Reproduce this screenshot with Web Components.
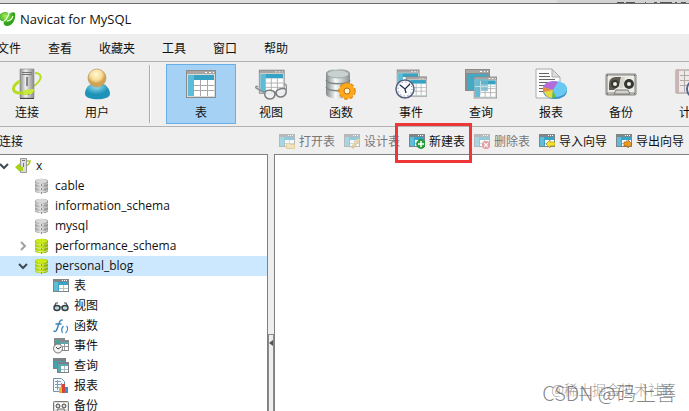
<!DOCTYPE html>
<html lang="zh-CN">
<head>
<meta charset="utf-8">
<meta name="viewport" content="width=device-width, initial-scale=1">
<title>Navicat for MySQL</title>
<style>
  html, body {
    height: 100%;
    margin: 0;
    overflow: hidden;
  }
  body {
    font-family: "Noto Sans CJK SC", sans-serif;
    font-size: 12px;
    line-height: 20px;
    color: #111;
    background: #fff;
  }
</style>
</head>
<body>
<navicat-window></navicat-window>

<script>
// parts that several icons share
const windowBase = `
  <path fill="#8b8b8b" d="M1 2h30v28H1z"/>
  <path fill="#a9a5a3" d="M2 3h28v3H2z"/>
  <path fill="#fff" d="M20 4h2v1h-2zM24 4h2v1h-2zM28 4h1v1h-1z"/>
  <path fill="#d9d9d6" d="M2 6h28v23H2z"/>
  <path fill="#37a3c4" d="M3 7h26v21H3z"/>
  <path fill="#7bcde3" d="M3 7h6v21H3z" opacity=".6"/>
  <path fill="#fff" d="M9 12h20v16H9z"/>
  <path stroke="#a9a9a9" fill="none" d="M9 17.500h20M9 22.500h20M15.500 12v16M22.500 12v16"/>`;

const smallWindow = `
  <path fill="#7d8589" d="M0 1h16v13H0z"/>
  <path fill="#fff" d="M9 2h1v1H9zM11 2h1v1h-1zM13 2h1v1h-1z"/>
  <path fill="#36a5c8" d="M1 4h14v9H1z"/>
  <path fill="#8ed3e6" d="M1 4h4v9H1z" opacity=".5"/>
  <path fill="#fff" d="M6 7h9v6H6z"/>
  <path stroke="#b9c3c8" fill="none" d="M6 10.500h9M10.500 7v6"/>`;

const cylinder = (a, b, c) => `
  <defs><linearGradient id="g"><stop stop-color="${b}"/><stop offset=".45" stop-color="${a}"/><stop offset="1" stop-color="${c}"/></linearGradient></defs>
  <path fill="url(#g)" d="M1 3c0-3 13-3 13 0v10c0 3-13 3-13 0z"/>
  <ellipse cx="7.500" cy="3" rx="6" ry="2" fill="${a}"/>
  <path fill="none" stroke="#fff" stroke-opacity=".5" stroke-width="1" d="M1 5c2 2.500 11 2.500 13 0M1 8.500c2 2.500 11 2.500 13 0M1 12c2 2.500 11 2.500 13 0"/>
  <path fill="none" stroke="${c}" stroke-dasharray="2 2" d="M7.500 6v10M11 6v9"/>`;

const icons = {
  logo: [16, `
    <defs><radialGradient id="l" cx=".4" cy=".3"><stop stop-color="#a8ef61"/><stop offset="1" stop-color="#2fa41b"/></radialGradient></defs>
    <path fill="url(#l)" d="M-1 5c1-3 4-4 7-4 2 0 2 2 3 2 1-1 4-3 6-1 1 6-2 13-8 13-3 0-4-3-3-5-3 1-5-2-5-5z"/>
    <path fill="none" stroke="#efffe2" stroke-width="1.200" d="M4 10c3-1 3-4 5-7M7 10c3 0 5-2 6-5"/>`],
  connect: [32, `
    <defs><linearGradient id="s"><stop stop-color="#8d8d8d"/><stop offset=".4" stop-color="#eee"/><stop offset="1" stop-color="#8a8a8a"/></linearGradient></defs>
    <path fill="none" stroke="#b7dc25" stroke-width="2" d="M24 5c10 0 6 11-6 15"/>
    <path fill="url(#s)" stroke="#888" stroke-width=".6" d="M9 1h14v29H9z"/>
    <path stroke="#777" fill="none" d="M11 4.500h10M11 6.500h10"/><path stroke="#333" d="M16 9v9"/>
    <path fill="#444" d="M14 24h1v3h-1zM17 24h1v3h-1zM9 30h14v1H9z"/>
    <path fill="none" stroke="#b5dc20" stroke-width="3" d="M9 13c-10 6-8 13 3 12 5 0 8-1 11-3"/>
    <path fill="#c8ea3a" d="M12 22l11-1-2 5-8 1z"/>`],
  user: [32, `
    <defs><radialGradient id="h" cx=".45" cy=".3"><stop stop-color="#fff9d5"/><stop offset=".65" stop-color="#f8dc98"/><stop offset="1" stop-color="#cfa352"/></radialGradient>
    <radialGradient id="b" cx=".45" cy=".2"><stop stop-color="#9be0f0"/><stop offset="1" stop-color="#1d93b9"/></radialGradient></defs>
    <path fill="url(#b)" d="M4 26c0-7 5-10 9-11h7c4 1 9 5 9 11 0 7-25 7-25 0z"/>
    <path fill="#7fd1e6" d="M12 16h9l-4 6z"/>
    <circle cx="16" cy="10" r="9" fill="url(#h)" stroke="#b99a66" stroke-width=".7"/>`],
  table: [32, windowBase],
  view: [32, `<g transform="translate(3 0) scale(.86)">${windowBase}</g>
    <path fill="#eef1f3" fill-opacity=".9" stroke="#7c7c7c" stroke-width="1.500" d="M10 24c2-3 9-2 10 1 0 4-2 6-5 6-4 0-6-3-5-7zM21 24c1-3 9-5 10-2 1 4-2 7-5 7s-5-2-5-5z"/>
    <path fill="none" stroke="#929292" stroke-width="1.500" d="M10 25L1 20c-1-2 1-2 2-1M31 22c1-3 1-6-2-6"/>`],
  func: [32, `
    <defs><linearGradient id="c"><stop stop-color="#838989"/><stop offset=".4" stop-color="#f7fafa"/><stop offset="1" stop-color="#8a9191"/></linearGradient></defs>
    <path fill="url(#c)" d="M1 6c0-7 24-7 24 0v20c0 6-24 6-24 0z"/><ellipse cx="13" cy="6" rx="11" ry="4" fill="#c9d1d0" stroke="#8e9898" stroke-width=".7"/>
    <path fill="none" stroke="#7e8888" stroke-width="1.500" d="M1 12c2 5 22 5 24 0M1 19c2 5 22 5 24 0"/>
    <circle cx="22" cy="23" r="7.500" fill="#f6a114" stroke="#e08a12" stroke-width="2.500" stroke-dasharray="3.500 2"/>
    <circle cx="22" cy="23" r="7.500" fill="#ffa81c"/><circle cx="22" cy="23" r="3" fill="#fff5cf" stroke="#bd6a0c"/>`],
  event: [32, `<g transform="translate(1 0) scale(.76)">${windowBase}</g><g transform="translate(10 7) scale(.72)">${windowBase}</g>
    <circle cx="10" cy="21" r="9" fill="#f9fbff" stroke="#57617d" stroke-width="1.500"/>
    <circle cx="10" cy="21" r="7" fill="none" stroke="#687188" stroke-dasharray="1 2.700"/>
    <path fill="none" stroke="#222d4a" stroke-width="1.300" d="M5 17l5 4 5-5M10 21l1 4"/>`],
  query: [32, `<g>
      <path fill="#8b8b8b" d="M0 1h25v22H0z"/><path fill="#a9a5a3" d="M1 2h23v3H1z"/><path fill="#fff" d="M15 3h2v1h-2zM19 3h1v1h-1zM22 3h1v1h-1z"/><path fill="#43a9c4" d="M2 6h21v16H2z"/>
    </g>
    <g transform="translate(8 7) scale(.78)">${windowBase}</g><path fill="#6db9cf" opacity=".75" d="M9 11h14v12H9z"/><path stroke="#c5dce4" fill="none" d="M15.500 13v14M10 18.500h20"/>`],
  report: [32, `
    <path fill="#fcfcfc" stroke="#aaa" d="M1 1h16l8 8v21H1z"/><path fill="#ddd" stroke="#aaa" d="M17 1v8h8z"/>
    <path stroke="#666" fill="none" d="M4 5.500h10M4 8.500h11M4 11.500h16M4 14.500h9M4 17.500h5M4 20.500h4M4 23.500h4"/>
    <ellipse cx="20" cy="23" rx="12" ry="8" fill="#3f93c8"/><ellipse cx="20" cy="21" rx="12" ry="8" fill="#69c9f2"/>
    <path fill="#b56bd9" d="M18 22L8 19c2-5 10-7 15-5z"/><path fill="#ed8a3c" d="M18 22L8 19c-1 2 0 4 1 5z"/><path fill="#e7d83d" d="M18 22l-9 2c1 3 4 6 8 6z"/><path fill="#67bd43" d="M18 22l-1 8 4-1z"/>`],
  backup: [32, `
    <rect x="1" y="6" width="30" height="21" rx="1" fill="#b9b9b4" stroke="#858580"/><path fill="#ecece8" d="M3 8h26v16H3z"/>
    <path fill="#5e5b50" d="M4 17c0-7 3-8 9-8h3l-2 9-5 4H4z"/>
    <path fill="#d6d4cb" d="M16 9h4l-2 11h-4z"/>
    <circle cx="10" cy="16" r="4" fill="#37372f"/><circle cx="24" cy="16" r="5" fill="#37372f"/>
    <circle cx="10" cy="16" r="2" fill="#eee"/><circle cx="24" cy="16" r="2" fill="#eee"/>
    <path fill="#d3d1c9" stroke="#777" d="M9 26l2-4h12l2 4z"/>
    <path fill="#555" d="M2 7h1v1H2zM29 7h1v1h-1zM2 25h1v1H2zM29 25h1v1h-1z"/>`],
  plan: [32, `<path fill="#eee9e9" stroke="#9b8f8f" d="M1 2h29v23H1z"/><path fill="#c9b5b5" d="M1 1h3v24H1z"/>
    <path fill="none" stroke="#b2a9a9" d="M5 7.500h24M5 12.500h24M5 17.500h24M9.500 3v21M15.500 3v21M21.500 3v21"/>
    <circle cx="21" cy="21" r="9" fill="#f6f9ff" stroke="#52678d" stroke-width="2"/>`],
  openTable: [16, `${smallWindow}<path fill="#f3d88c" stroke="#d7ae49" d="M7.500 10.500h3l1 1h4v4h-8z"/>`],
  designTable: [16, `${smallWindow}<path stroke="#c0a143" stroke-width="3" d="M8 15l7-9"/><path stroke="#ffe891" d="M9 13l6-7"/>`],
  newTable: [16, `${smallWindow}<circle cx="12" cy="11" r="4.500" fill="#27a53b" stroke="#147d26" stroke-width=".6"/><path stroke="#fff" stroke-width="1.500" d="M12 8v6M9 11h6"/>`],
  dropTable: [16, `${smallWindow}<circle cx="12" cy="12" r="4" fill="#dc4854"/><path stroke="#fff" stroke-width="1.300" d="M10 10l4 4M14 10l-4 4"/>`],
  importTable: [16, `${smallWindow}<path fill="#f5df32" stroke="#a98f12" stroke-width=".7" d="M7 11l4-4v2h5v4h-5v2z"/>`],
  exportTable: [16, `${smallWindow}<path fill="#f19a22" stroke="#a75c0d" stroke-width=".7" d="M16 11l-4-4v2H8v4h4v2z"/>`],
  server: [16, `<path fill="none" stroke="#a8ce1c" stroke-width="1.500" d="M10 3h5c0 3-2 4-4 5"/>
    <path fill="#ddd" stroke="#999" d="M5.500.500h6v14h-6z"/><path fill="#777" d="M7 2h3v1H7zM8 5h1v4H8z"/>
    <path fill="#a9d317" d="M0 9l5-4v3l3 1v4H5v1z"/>`],
  dbOff: [16, cylinder('#d9d9d9', '#9b9b9b', '#8e8e8e')],
  dbOn: [16, cylinder('#cbea19', '#9fc60d', '#86aa08')],
  smallTable: [16, smallWindow],
  smallView: [16, `<path fill="none" stroke="#474d50" stroke-width="1.200" d="M1 9l2-4h2M15 9l-2-4h-2M7 9h2"/>
    <ellipse cx="4" cy="10" rx="3" ry="2.500" fill="#b7dadd" stroke="#383e41" stroke-width="1.400"/><ellipse cx="12" cy="10" rx="3" ry="2.500" fill="#b7dadd" stroke="#383e41" stroke-width="1.400"/>`],
  smallFunc: [16, `<path fill="none" stroke="#3a86b9" stroke-width="1.500" stroke-linecap="round" d="M1 13c4 3 4-12 8-11M3 6h5"/>
    <path fill="none" stroke="#3a86b9" stroke-width="1.200" d="M10.500 8c-2 2-2 5-1 7M13.500 8c2 2 1 5-1 7"/>`],
  smallEvent: [16, `<path fill="#85898a" d="M1 0h11v9H1z"/><path fill="#4aa39d" d="M2 2h9v6H2z"/><path fill="#85898a" d="M6 2h10v11H6z"/><path fill="#5da8af" d="M7 4h8v3H7z"/><path fill="#fff" d="M8 6h7v6H8z"/>
    <path stroke="#999" fill="none" d="M11.500 6v6M9 8.500h6"/><circle cx="5" cy="10.500" r="4.500" fill="#f3f3f3" stroke="#757575"/><path fill="none" stroke="#444" d="M3 9l2 2 3-2"/>`],
  smallQuery: [16, `<path fill="#7b8184" d="M0 0h13v11H0z"/><path fill="#45a2ad" d="M1 3h11v7H1z"/><path fill="#7b8184" d="M4 4h12v11H4z"/><path fill="#5da8af" d="M5 6h10v8H5z"/><path fill="#fff" d="M8 8h7v6H8z"/><path stroke="#abb" fill="none" d="M8 11.500h7M11.500 8v6"/>`],
  smallReport: [16, `<path fill="#f6faff" stroke="#7590a9" d="M.500.500h8l3 3v10h-11z"/><path fill="none" stroke="#7a9cbb" d="M2 3.500h6M2 6.500h8M2 9.500h5M4.500 2v10M8.500 5v4"/>
    <path fill="#d84436" d="M9 6h3v9H9z"/><path fill="#e4b633" d="M6 9h3v6H6z"/><path fill="#448bc9" d="M12 9h3v6h-3z"/>`],
  smallBackup: [16, `<rect x=".5" y="3.500" width="15" height="10" rx="1" fill="#ddd" stroke="#777"/><path fill="#fff" d="M2 5h12v6H2z"/>
    <circle cx="5" cy="8" r="2" fill="#ddd" stroke="#444"/><circle cx="11" cy="8" r="2" fill="#ddd" stroke="#444"/><path fill="none" stroke="#777" d="M4 13l1-2h6l1 2"/>`],
};

class AppIcon extends HTMLElement {
  constructor() {
    super();
    this.attachShadow({ mode: 'open' });
  }

  connectedCallback() {
    const [size, drawing] = icons[this.getAttribute('name')];
    this.shadowRoot.innerHTML = `
      <style>
        :host { display: block; flex: none; width: ${size}px; height: ${size}px; }
        svg { display: block; }
      </style>
      <svg width="${size}" height="${size}" viewBox="0 0 ${size} ${size}" aria-hidden="true">${drawing}</svg>`;
  }
}
customElements.define('app-icon', AppIcon);

// large button of the main toolbar
class ToolButton extends HTMLElement {
  constructor() {
    super();
    const shadow = this.attachShadow({ mode: 'open' });
    shadow.innerHTML = `
      <style>
        :host { display: block; flex: none; width: 70px; }
        button {
          display: flex;
          flex-direction: column;
          align-items: center;
          box-sizing: border-box;
          width: 100%;
          height: 60px;
          padding: 3px 0 0;
          border: 1px solid transparent;
          background: none;
          font: inherit;
          color: inherit;
        }
        span { margin-top: 2px; }
        :host([selected]) button { background: #a5d1f5; border-color: #68aee8; }
      </style>
      <button type="button"><app-icon name="${this.getAttribute('icon')}"></app-icon><span><slot></slot></span></button>`;
  }
}
customElements.define('tool-button', ToolButton);

// small button of the object toolbar
class ActionButton extends HTMLElement {
  constructor() {
    super();
    const shadow = this.attachShadow({ mode: 'open' });
    const disabled = this.hasAttribute('disabled') ? 'disabled' : '';
    shadow.innerHTML = `
      <style>
        :host { display: block; flex: none; position: relative; }
        button {
          display: flex;
          align-items: center;
          gap: 4px;
          padding: 0;
          border: 0;
          background: none;
          font: inherit;
          color: inherit;
          white-space: nowrap;
        }
        button:disabled { color: #777; }
        button:disabled app-icon { opacity: 0.5; }
        :host([marked])::after {
          content: "";
          position: absolute;
          inset: -8px -7px -12px -14px;
          border: 3px solid #ee3538;
          pointer-events: none;
          z-index: 1;
        }
      </style>
      <button type="button" ${disabled}><app-icon name="${this.getAttribute('icon')}"></app-icon><slot></slot></button>`;
  }
}
customElements.define('action-button', ActionButton);

class TreeRow extends HTMLElement {
  constructor() {
    super();
    const shadow = this.attachShadow({ mode: 'open' });
    const state = this.getAttribute('state');
    const arrow = {
      open: '<path fill="none" stroke="#404b52" stroke-width="2" d="M1 3l4 4 4-4"/>',
      closed: '<path fill="none" stroke="#a0a0a0" stroke-width="2" d="M3 1l4 4-4 4"/>',
    }[state] || '';
    shadow.innerHTML = `
      <style>
        :host {
          display: flex;
          align-items: center;
          height: 20px;
          white-space: nowrap;
          font-family: "Open Sans", "Noto Sans CJK SC", sans-serif;
        }
        :host([level="1"]) { padding-left: 19px; }
        :host([level="2"]) { padding-left: 38px; }
        :host([selected]) { background: #cce8ff; }
        svg { flex: none; margin-right: 6px; margin-left: -1px; }
        span { margin-left: 5px; }
      </style>
      <svg width="10" height="10" viewBox="0 0 10 10" aria-hidden="true">${arrow}</svg>
      <app-icon name="${this.getAttribute('icon')}"></app-icon>
      <span><slot></slot></span>`;
    this.setAttribute('role', 'treeitem');
  }
}
customElements.define('tree-row', TreeRow);

class MenuBar extends HTMLElement {
  constructor() {
    super();
    const shadow = this.attachShadow({ mode: 'open' });
    const items = ['文件', '查看', '收藏夹', '工具', '窗口', '帮助'];
    shadow.innerHTML = `
      <style>
        :host { display: block; background: #eee; border-bottom: 1px solid #b2b2b2; }
        nav { display: flex; gap: 27px; height: 27px; margin-left: -3px; }
        button { padding: 0; border: 0; background: none; font: inherit; color: inherit; }
      </style>
      <nav>${items.map((item) => `<button type="button">${item}</button>`).join('')}</nav>`;
  }
}
customElements.define('menu-bar', MenuBar);

class SplitHandle extends HTMLElement {
  constructor() {
    super();
    const shadow = this.attachShadow({ mode: 'open' });
    shadow.innerHTML = `
      <style>
        :host {
          display: grid;
          grid-template-rows: 7fr 3fr;
          box-sizing: border-box;
          width: 8px;
          background: #eee;
          border: solid #808080;
          border-width: 0 1px;
        }
        button {
          padding: 5px 0 0;
          border: 1px solid #8a8a8a;
          border-bottom: 0;
          background: #eee;
          display: flex;
          align-items: flex-start;
          justify-content: center;
        }
      </style>
      <div></div>
      <button type="button" aria-label="折叠">
        <svg width="4" height="6" viewBox="0 0 4 6"><path fill="#555" d="M4 0v6L0 3z"/></svg>
      </button>`;
  }
}
customElements.define('split-handle', SplitHandle);

class NavicatWindow extends HTMLElement {
  constructor() {
    super();
    const shadow = this.attachShadow({ mode: 'open' });
    shadow.innerHTML = `
      <style>
        :host {
          display: grid;
          grid-template-rows: auto auto auto auto auto minmax(0, 1fr);
          grid-template-columns: minmax(0, 1fr);
          height: 100vh;
          overflow: hidden;
          position: relative;
        }
        .backdrop {
          display: flex;
          justify-content: flex-end;
          height: 3px;
          background: #dedede;
          border-bottom: 1px solid #6b6b6b;
        }
        .backdrop svg { background: #d2d2d2; }
        header {
          display: flex;
          align-items: center;
          gap: 4px;
          height: 30px;
          background: #fff;
        }
        h1 {
          margin: 0;
          font: 13px/20px "Open Sans", sans-serif;
        }
        .tools {
          display: flex;
          height: 60px;
          padding: 2px 0;
          margin-left: -8px;
        }
        .tools-wrap, .actions { background: #efefef; }
        .tools-wrap { overflow: hidden; border-bottom: 1px solid #b2b2b2; }
        hr {
          flex: none;
          height: 58px;
          margin: 1px 15px 0 17px;
          border: 0;
          border-left: 1px solid #aaa;
          border-right: 1px solid #fff;
        }
        .actions {
          display: grid;
          grid-template-columns: 279px minmax(0, 1fr);
          align-items: center;
          height: 27px;
          padding-top: 1px;
          box-sizing: border-box;
        }
        .label { margin-left: -1px; }
        .buttons { display: flex; gap: 9px; }
        main {
          display: grid;
          grid-template-columns: 267px 8px minmax(0, 1fr);
          min-height: 0;
        }
        .tree, .objects { border-top: 1px solid #808080; background: #fff; overflow: hidden; }
        .tree { padding-top: 1px; }
        .mark {
          position: absolute;
          right: 13px;
          bottom: 6px;
          font-size: 20px;
          line-height: 24px;
          color: rgba(80, 80, 80, 0.7);
          font-weight: 300;
          white-space: nowrap;
        }
        .mark.second {
          bottom: 10px;
          font-size: 14px;
          color: rgba(120, 120, 120, 0.7);
        }
      </style>
      <div class="backdrop">
        <svg width="132" height="3" viewBox="0 0 132 3" aria-hidden="true"><path fill="none" stroke="#555" d="M60 2.500h7M69 2.500h9M88 2.500h1M97 2.500h3M103 2.500h12M118 2.500h2M124 2.500h5"/></svg>
      </div>
      <header><app-icon name="logo"></app-icon><h1>Navicat for MySQL</h1></header>
      <menu-bar></menu-bar>
      <div class="tools-wrap">
        <div class="tools">
          <tool-button icon="connect">连接</tool-button>
          <tool-button icon="user">用户</tool-button>
          <hr>
          <tool-button icon="table" selected>表</tool-button>
          <tool-button icon="view">视图</tool-button>
          <tool-button icon="func">函数</tool-button>
          <tool-button icon="event">事件</tool-button>
          <tool-button icon="query">查询</tool-button>
          <tool-button icon="report">报表</tool-button>
          <tool-button icon="backup">备份</tool-button>
          <tool-button icon="plan">计划</tool-button>
        </div>
      </div>
      <div class="actions">
        <div class="label">连接</div>
        <div class="buttons">
          <action-button icon="openTable" disabled>打开表</action-button>
          <action-button icon="designTable" disabled>设计表</action-button>
          <action-button icon="newTable" marked>新建表</action-button>
          <action-button icon="dropTable" disabled>删除表</action-button>
          <action-button icon="importTable">导入向导</action-button>
          <action-button icon="exportTable">导出向导</action-button>
        </div>
      </div>
      <main>
        <div class="tree" role="tree" aria-label="连接">
          <tree-row level="0" icon="server" state="open">x</tree-row>
          <tree-row level="1" icon="dbOff">cable</tree-row>
          <tree-row level="1" icon="dbOff">information_schema</tree-row>
          <tree-row level="1" icon="dbOff">mysql</tree-row>
          <tree-row level="1" icon="dbOn" state="closed">performance_schema</tree-row>
          <tree-row level="1" icon="dbOn" state="open" selected>personal_blog</tree-row>
          <tree-row level="2" icon="smallTable">表</tree-row>
          <tree-row level="2" icon="smallView">视图</tree-row>
          <tree-row level="2" icon="smallFunc">函数</tree-row>
          <tree-row level="2" icon="smallEvent">事件</tree-row>
          <tree-row level="2" icon="smallQuery">查询</tree-row>
          <tree-row level="2" icon="smallReport">报表</tree-row>
          <tree-row level="2" icon="smallBackup">备份</tree-row>
        </div>
        <split-handle></split-handle>
        <div class="objects"></div>
      </main>
      <div class="mark second">@稀土掘金技术社区</div>
      <div class="mark">CSDN @码上善</div>`;
  }
}
customElements.define('navicat-window', NavicatWindow);
</script>
</body>
</html>
